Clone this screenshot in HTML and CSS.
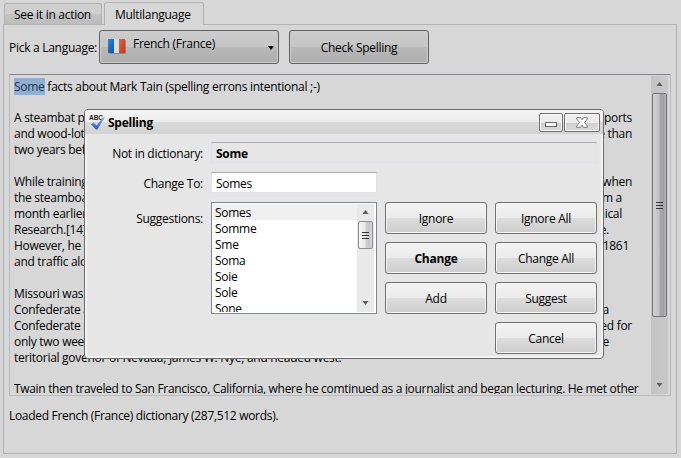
FILE: index.html
```html
<!DOCTYPE html>
<html lang="en">
<head>
<meta charset="utf-8">
<title>Spelling</title>
<link rel="stylesheet" href="styles.css">
</head>
<body>
<div class="app">
  <div class="tabs">
    <div class="tab">See it in action</div>
    <div class="tab active">Multilanguage</div>
  </div>
  <main class="panel">
    <div class="toolbar">
      <span class="pick">Pick a Language:</span>
      <div class="btn dark combo">
        <svg class="flag" width="20" height="18" viewBox="0 0 20 18">
          <defs>
            <linearGradient id="fb" x2="1" y2="1"><stop offset="0" stop-color="#2389dc"/><stop offset="1" stop-color="#1751a0"/></linearGradient>
            <linearGradient id="fr" x2="1" y2="1"><stop offset="0" stop-color="#e2653f"/><stop offset="1" stop-color="#c43714"/></linearGradient>
          </defs>
          <rect x="2" y="3" width="17" height="14" rx="1" fill="#6c6c6c" opacity=".6"/>
          <rect x="1" y="2" width="17" height="14" rx="1" fill="#dcdcdc"/>
          <rect x="1" y="2" width="6" height="14" fill="url(#fb)"/>
          <rect x="12" y="2" width="6" height="14" fill="url(#fr)"/>
        </svg>
        <span class="lang">French (France)</span>
        <svg class="arrow" width="6" height="4"><path d="M0 0h6L3 4z" fill="#000"/></svg>
      </div>
      <div class="btn dark check">Check Spelling</div>
    </div>
    <div class="textbox">
      <div class="text">
        <p><span><mark>Some</mark> facts about Mark Tain (spelling errons intentional ;-)</span></p>
        <p></p>
        <p><span>A steambat p</span><span class="r1">ports</span></p>
        <p><span>and wood-lot</span><span class="r1">e than</span></p>
        <p><span>two years bef</span></p>
        <p></p>
        <p><span>While training</span><span class="r1">when</span></p>
        <p><span>the steamboa</span><span class="r3">m a</span></p>
        <p><span>month earlier</span><span class="r3">nical</span></p>
        <p><span>Research.[14]</span><span class="r4">e.</span></p>
        <p><span>However, he c</span><span class="r2">1861</span></p>
        <p><span>and traffic alo</span></p>
        <p></p>
        <p><span>Missouri was</span></p>
        <p><span>Confederate a</span><span class="r4">a</span></p>
        <p><span>Confederate r</span><span class="r1">ed for</span></p>
        <p><span>only two wee</span><span class="r4">e</span></p>
        <p><span>teritorial govenor of Nevada, James W. Nye, and headed west.</span></p>
        <p></p>
        <p class="last"><span>Twain then traveled to San Francisco, California, where he comtinued as a journalist and began lecturing. He met other</span></p>
      </div>
      <div class="bar">
        <i class="up"></i>
        <div class="thumb"><svg width="7" height="9"><path d="M0 1.5h7M0 4.5h7M0 7.5h7" stroke="#333"/></svg></div>
        <i class="down"></i>
      </div>
    </div>
    <div class="status">Loaded French (France) dictionary (287,512 words).</div>
  </main>
</div>

<section class="dialog">
  <header class="title">
    <svg class="abc" width="17" height="18" viewBox="0 0 17 18">
      <defs><linearGradient id="ck" x2="0" y2="1"><stop offset="0" stop-color="#8fb0ee"/><stop offset="1" stop-color="#2554bd"/></linearGradient></defs>
      <text x="0" y="7" class="abc-text" textLength="14" lengthAdjust="spacingAndGlyphs">ABC</text>
      <path d="M2 11.500 4.500 9.500 7.500 12.500 14 4.500 16 4 8.300 16.500 7 16.500z" fill="url(#ck)"/>
    </svg>
    <b>Spelling</b>
    <div class="win">
      <svg width="12" height="6"><rect x=".5" y=".5" width="11" height="4" fill="#fff" stroke="#666" /></svg>
    </div>
    <div class="win close">
      <svg width="12" height="11" viewBox="0 0 12 11"><path d="M.7 .7H4.600L6 2.800 7.400 .7H11.300V2L8.500 5.500 11.300 9V10.300H7.400L6 8.200 4.600 10.300H.7V9L3.500 5.500 .7 2z" fill="#fff" stroke="#777"/></svg>
    </div>
  </header>
  <div class="body">
    <span class="label l1">Not in dictionary:</span>
    <div class="field word"><b>Some</b></div>
    <span class="label l2">Change To:</span>
    <div class="field input">Somes</div>
    <span class="label l3">Suggestions:</span>
    <div class="list">
      <ul><li class="sel">Somes</li><li>Somme</li><li>Sme</li><li>Soma</li><li>Soie</li><li>Sole</li><li>Sone</li></ul>
      <div class="bar small">
        <i class="up"></i>
        <div class="thumb"><svg width="7" height="9"><path d="M0 1.500h7M0 4.500h7M0 7.500h7" stroke="#333"/></svg></div>
        <i class="down"></i>
      </div>
    </div>
    <div class="actions">
      <div class="btn">Ignore</div><div class="btn">Ignore All</div>
      <div class="btn"><b>Change</b></div><div class="btn">Change All</div>
      <div class="btn">Add</div><div class="btn">Suggest</div>
      <div class="btn cancel">Cancel</div>
    </div>
  </div>
</section>
</body>
</html>
```

FILE: styles.css
```css
* { box-sizing: border-box; }
body {
  margin: 0;
  width: 681px;
  height: 458px;
  overflow: hidden;
  background: #d7d7d7;
  color: #000;
  font: 12px/16px "Open Sans", "Noto Sans", sans-serif;
  letter-spacing: -0.28px;
  white-space: nowrap;
}
svg { display: block; flex: none; }
b { letter-spacing: -0.25px; }

.app { padding: 2px 4px 0 3px; }
.tabs { display: flex; align-items: flex-end; height: 22px; }
.tab {
  width: 98px;
  height: 21px;
  margin-left: 1px;
  padding: 3px 0 0 9px;
  border: 1px solid #b3b3b3;
  border-bottom: 0;
  border-radius: 3px 3px 0 0;
  background: linear-gradient(#cfcfcf 0 50%, #c3c3c3 50%, #bdbdbd);
}
.tab.active {
  position: relative;
  width: 100px;
  height: 23px;
  margin: 0 0 -1px 2px;
  padding: 4px 0 0 10px;
  background: #d7d7d7;
}
.panel {
  height: 430px;
  border: 1px solid #b3b3b3;
  padding: 5px 5px 0;
}
.toolbar { display: flex; align-items: center; height: 34px; }
.pick { width: 90px; padding-top: 2px; }

.btn {
  display: flex;
  align-items: center;
  justify-content: center;
  padding-top: 2px;
  border: 1px solid #707070;
  border-radius: 3px;
  background: linear-gradient(#f3f3f3, #ebebeb 50%, #dcdcdc 50%, #cdcdcd);
  box-shadow: inset 0 0 0 1px #f6f6f6;
}
.dark {
  height: 34px;
  border-color: #606060;
  background: linear-gradient(#cccccc, #c5c5c5 50%, #b9b9b9 50%, #adadad);
  box-shadow: inset 0 0 0 1px #cdcdcd;
}
.combo { width: 180px; justify-content: flex-start; padding: 0 4px 0 7px; }
.check { width: 140px; margin-left: 10px; }
.lang { margin: -6px auto 0 6px; }
.flag { margin-top: -2px; }
.arrow { margin-top: 2px; }

.textbox {
  display: flex;
  height: 322px;
  margin-top: 10px;
  padding: 1px 1px 1px 4px;
  border: 1px solid #b9babd;
  border-top-color: #84858c;
}
.text { flex: 1; height: 318px; overflow: hidden; padding-top: 2.600px; }
.text p { display: flex; justify-content: space-between; height: 15.940px; margin: 0; line-height: 16px; }
.text .last { letter-spacing: -0.32px; }
mark { background: #90afd3; color: #1a3350; }
.r1 { margin-right: 19px; }
.r2 { margin-right: 22px; }
.r3 { margin-right: 29px; }
.r4 { margin-right: 42px; }

.bar {
  display: flex;
  flex-direction: column;
  align-items: center;
  width: 17px;
  margin-right: 1px;
  background: linear-gradient(90deg, #c3c3c3, #c9c9c9);
}
.bar i { width: 6px; height: 4px; background: #5b5f62; flex: none; }
.up { margin: 6px 0 7px; clip-path: polygon(50% 0, 100% 100%, 0 100%); }
.down { margin: auto 0 7px; clip-path: polygon(0 0, 100% 0, 50% 100%); }
.thumb {
  display: flex;
  align-items: center;
  justify-content: center;
  width: 15px;
  height: 224px;
  border: 1px solid #76777a;
  border-radius: 2px;
  background: linear-gradient(90deg, #cfcfcf, #c4c4c6 45%, #a9a9ac 55%, #a0a0a4 80%, #b9b9bb);
}
.status { margin-top: 12px; letter-spacing: -0.31px; }

.dialog {
  position: absolute;
  left: 84px;
  top: 109px;
  width: 520px;
  height: 250px;
  border: 1px solid #6b6b6b;
  border-radius: 4px;
  background: #e6e6e6;
  box-shadow: inset 0 0 0 2px #f3f3f3;
  overflow: hidden;
}
.title {
  display: flex;
  height: 24px;
  padding: 3px 3px 0 4px;
  background: linear-gradient(#f4f4f4, #ececec 50%, #dadada 50%, #d3d3d3);
}
.title b { margin: 2px auto 0 2px; }
.abc-text { font: bold 7px "Liberation Sans", sans-serif; letter-spacing: 0; fill: #222; }
.win {
  display: flex;
  align-items: flex-end;
  justify-content: center;
  width: 24px;
  height: 19px;
  padding-bottom: 3px;
  border: 1px solid #707070;
  border-radius: 2px;
  background: linear-gradient(#f2f2f2, #e9e9e9 50%, #cfcfcf 50%, #dadada);
  box-shadow: inset 0 0 0 1px #fafafa;
}
.win.close { width: 36px; margin-left: 1px; }

.body {
  display: grid;
  grid-template-columns: 118px 166px 212px;
  grid-template-rows: 21px 21px 112px;
  column-gap: 8px;
  row-gap: 9px;
  padding: 8px 6px 0 0;
  height: 224px;
}
.label { grid-column: 1; text-align: right; }
.l1, .l2 { padding-top: 4px; }
.l3 { padding-top: 9px; }
.field { padding: 3px 4px; border: 1px solid #e0e3e8; border-top-color: #abadb3; }
.word { grid-column: 2 / 4; border-left-color: #dcdfe6; }
.input { background: #fff; }
.list {
  display: flex;
  height: 112px;
  padding: 1px;
  border: 1px solid #828790;
  background: #fff;
}
.list ul { flex: 1; height: 108px; margin: 0; padding: 0; overflow: hidden; list-style: none; }
.list li { height: 16px; padding-left: 2px; line-height: 17px; }
.sel { background: #f0f0f0; }
.small { background: #e9e9e9; }
.small .thumb {
  height: 28px;
  border-color: #8e8e8e;
  background: linear-gradient(90deg, #f5f5f5, #e8e8e8 45%, #cfcfd1 55%, #c6c6c9 80%, #dcdcdc);
}
.actions {
  display: grid;
  grid-template-columns: 102px 102px;
  grid-auto-rows: 32px;
  gap: 8px;
}
.cancel { grid-column: 2; }
```
